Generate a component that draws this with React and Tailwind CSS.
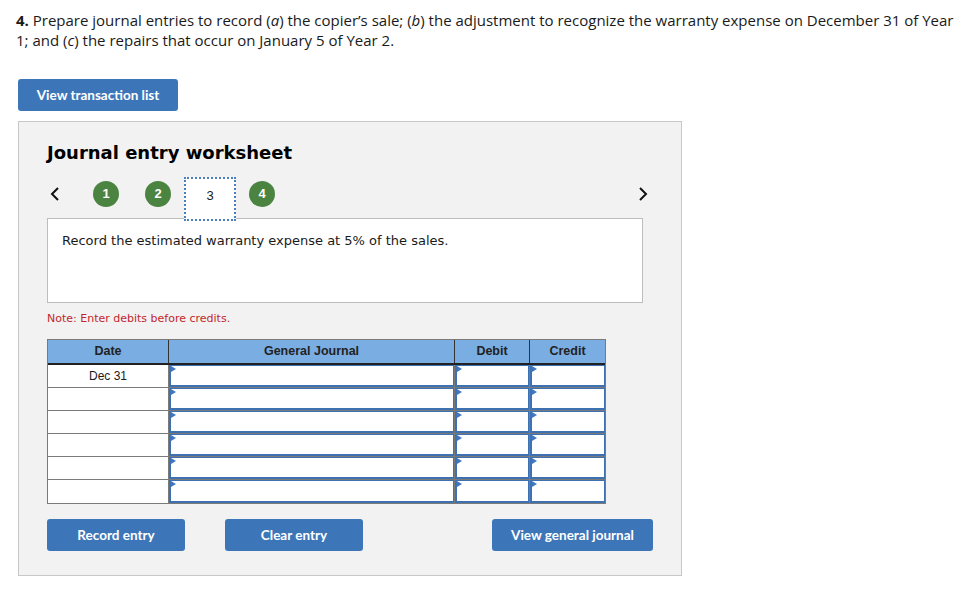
import React from "react";

const sans = { fontFamily: "Lato, 'Open Sans', Arial, sans-serif" };
const body = { fontFamily: "'Open Sans', Lato, Arial, sans-serif" };
const verdana = { fontFamily: "'DejaVu Sans', Verdana, sans-serif" };
const arial = { fontFamily: "'Liberation Sans', Arial, sans-serif" };

/* small blue marker at the top-left of an input cell */
function Marker() {
  return (
    <svg width="5" height="7" viewBox="0 0 5 7" className="absolute left-0 top-0">
      <path d="M0 0 L5 3 L0 6 Z" fill="#3f78c0" />
    </svg>
  );
}

function InputCell({ w, last }) {
  return (
    <div className={`${w} h-full ${last ? "" : "border-r border-[#7a7a7a]"}`}>
      <div className="relative h-full bg-white border border-[#3e71b1] border-l-2 border-b-2">
        <Marker />
      </div>
    </div>
  );
}

function Step({ n }) {
  return (
    <div className="w-[52px] flex justify-center">
      <div
        className="w-[26px] h-[26px] rounded-full bg-[#4b8341] text-white text-[13px] font-bold flex items-center justify-center"
        style={arial}
      >
        {n}
      </div>
    </div>
  );
}

function Btn({ children, className = "" }) {
  return (
    <button
      className={`h-[32px] rounded-[3px] bg-[#3d76b8] text-white text-[13.5px] font-bold ${className}`}
      style={sans}
    >
      {children}
    </button>
  );
}

export default function App() {
  const rows = ["Dec 31", "", "", "", "", ""];
  return (
    <div className="w-[972px] h-[599px] bg-white overflow-hidden text-[#1a1a1a]">
      <p className="pl-[16px] pt-[10px] text-[15px] leading-5 whitespace-nowrap" style={body}>
        <b>4.</b> Prepare journal entries to record (<i>a</i>) the copier’s sale; (<i>b</i>) the adjustment to
        recognize the warranty expense on December 31 of Year
        <br />
        1; and (<i>c</i>) the repairs that occur on January 5 of Year 2.
      </p>

      <div className="pl-[18px] mt-[29px]">
        <Btn className="w-[160px]">View transaction list</Btn>
      </div>

      <div className="ml-[18px] mt-[10px] w-[664px] h-[455px] bg-[#f2f2f2] border border-[#c8c8c8] pl-[28px] pt-[19px]">
        <h2 className="text-[18px] font-bold text-black leading-6" style={verdana}>
          Journal entry worksheet
        </h2>

        <div className="mt-[12px] w-[610px] h-[41px] flex items-start">
          <div className="w-[33px] h-[34px] flex items-center pl-[3px]">
            <svg width="10" height="14" viewBox="0 0 10 14">
              <path d="M8 1 L2 7 L8 13" fill="none" stroke="#111" strokeWidth="2" />
            </svg>
          </div>
          <div className="flex items-start">
            <div className="h-[34px] flex items-center"><Step n="1" /></div>
            <div className="h-[34px] flex items-center"><Step n="2" /></div>
            <div className="w-[52px] flex justify-center">
              <div
                className="relative z-10 w-[53px] h-[44px] bg-white border-2 border-dotted border-[#4a7fc1] flex items-start justify-center pt-[7px] text-[13px]"
                style={arial}
              >
                3
              </div>
            </div>
            <div className="h-[34px] flex items-center"><Step n="4" /></div>
          </div>
          <div className="ml-auto h-[34px] flex items-center pr-[9px]">
            <svg width="10" height="14" viewBox="0 0 10 14">
              <path d="M2 1 L8 7 L2 13" fill="none" stroke="#111" strokeWidth="2" />
            </svg>
          </div>
        </div>

        <div className="w-[596px] h-[85px] bg-white border border-[#bdbdbd] pl-[14px] pt-[14px]">
          <p className="text-[13px] leading-4" style={verdana}>
            Record the estimated warranty expense at 5% of the sales.
          </p>
        </div>

        <p className="mt-[8px] text-[11px] text-[#c1272d] leading-4" style={verdana}>
          Note: Enter debits before credits.
        </p>

        <div className="mt-[12px] w-[559px] border border-[#7a7a7a]" style={arial}>
          <div className="flex h-[25px] bg-[#7aade2] border-b-2 border-[#222] text-[12.5px] font-bold text-[#222]">
            <div className="w-[121px] border-r border-[#333] flex items-center justify-center">Date</div>
            <div className="w-[286px] border-r border-[#333] flex items-center justify-center">General Journal</div>
            <div className="w-[75px] border-r border-[#333] flex items-center justify-center">Debit</div>
            <div className="w-[75px] flex items-center justify-center">Credit</div>
          </div>
          {rows.map((d, i) => (
            <div
              key={i}
              className={`flex h-[23px] ${i < rows.length - 1 ? "border-b border-[#7a7a7a]" : ""}`}
            >
              <div className="w-[121px] border-r border-[#7a7a7a] bg-white text-center text-[12px] pt-[3px] leading-4">
                {d}
              </div>
              <InputCell w="w-[286px]" />
              <InputCell w="w-[75px]" />
              <InputCell w="w-[75px]" last />
            </div>
          ))}
        </div>

        <div className="mt-[15px] flex">
          <Btn className="w-[138px]">Record entry</Btn>
          <Btn className="w-[138px] ml-[40px]">Clear entry</Btn>
          <Btn className="w-[161px] ml-[129px]">View general journal</Btn>
        </div>
      </div>
    </div>
  );
}
